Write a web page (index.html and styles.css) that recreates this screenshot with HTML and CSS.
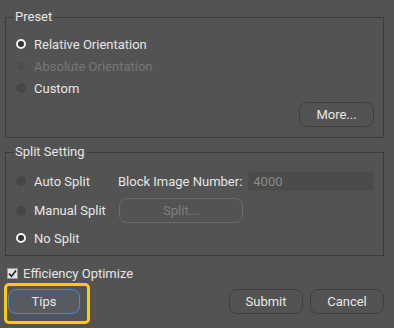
FILE: index.html
```html
<!DOCTYPE html>
<html>
  <head>
    <meta charset="utf-8" />
    <title>Preset</title>
    <link rel="stylesheet" href="styles.css">
  </head>
  <body>
    <div class="dialog">
      <fieldset class="group group--preset">
        <legend class="group__title">Preset</legend>
        <label class="radio">
          <span class="radio__dot radio__dot--on"></span>Relative Orientation
        </label>
        <label class="radio radio--disabled">
          <span class="radio__dot"></span>Absolute Orientation
        </label>
        <label class="radio">
          <span class="radio__dot"></span>Custom
        </label>
        <div class="group__actions">
          <button class="btn btn--more">More...</button>
        </div>
      </fieldset>

      <fieldset class="group group--split">
        <legend class="group__title">Split Setting</legend>
        <div class="split">
          <label class="radio">
            <span class="radio__dot"></span>Auto Split
          </label>
          <div class="split__field">
            <span class="split__label">Block Image Number:</span>
            <input class="split__input" type="text" value="4000" disabled />
          </div>
          <label class="radio">
            <span class="radio__dot"></span>Manual Split
          </label>
          <div class="split__field">
            <button class="btn btn--split" disabled>Split...</button>
          </div>
          <label class="radio radio--last">
            <span class="radio__dot radio__dot--on"></span>No Split
          </label>
        </div>
      </fieldset>

      <label class="check">
        <span class="check__box">
          <svg width="9" height="9" viewBox="0 0 9 9">
            <path d="M1 4.6 L3.5 7.2 L8 1.4" fill="none" stroke="#222" stroke-width="1.6" />
          </svg>
        </span>
        Efficiency Optimize
      </label>

      <div class="footer">
        <div class="footer__tips">
          <button class="btn btn--tips">Tips</button>
          <span class="highlight"></span>
        </div>
        <div class="footer__right">
          <button class="btn">Submit</button>
          <button class="btn">Cancel</button>
        </div>
      </div>
    </div>
  </body>
</html>
```

FILE: styles.css
```css
body {
  --color-bg: #535353;
  --color-text: #e6e6e6;
  --color-muted: #767676;
  --color-line: #3b3b3b;

  margin: 0;
  height: 328px;
  background: var(--color-bg);
  color: var(--color-text);
  font: 400 13px "Roboto", "Noto Sans", sans-serif;
  overflow: hidden;
}

.dialog {
  padding: 9px 10px 0 5px;
}

.group {
  margin: 0;
  min-width: 0;
  padding: 0 9px 0 10px;
  border: 1px solid var(--color-line);
}

.group__title {
  padding: 0 2px;
  margin-left: -3px;
  line-height: 16px;
}

.group--preset {
  height: 129px;
  box-sizing: border-box;
  padding-top: 8px;
}

.group--split {
  margin-top: 6px;
  padding-top: 11px;
  padding-bottom: 5px;
}

.group__actions {
  display: flex;
  justify-content: flex-end;
  margin-top: 3px;
}

.radio {
  display: flex;
  align-items: center;
  gap: 8px;
  height: 22px;
}

.radio--disabled {
  color: var(--color-muted);
}

.radio__dot {
  width: 10px;
  height: 10px;
  border-radius: 50%;
  background: #474747;
  box-sizing: border-box;
}

.radio--disabled .radio__dot {
  background: #4d4d4d;
  border: 1px solid #575757;
}

.radio__dot--on {
  background: #333;
  border: 2.5px solid #f2f2f2;
}

.split {
  display: grid;
  grid-template-columns: 102px minmax(0, 1fr);
  grid-template-rows: 20px 25px 20px;
  row-gap: 7px;
}

.split .radio {
  height: auto;
}

.split .radio--last {
  height: 20px;
  margin-top: -2px;
}

.split__field {
  display: flex;
  align-items: center;
  gap: 6px;
}

.split__label {
  white-space: nowrap;
}

.split__input {
  flex: 1;
  min-width: 0;
  height: 20px;
  box-sizing: border-box;
  padding: 0 4px;
  border: 1px solid #4f4f4f;
  border-radius: 2px;
  background: #4b4b4b;
  color: #8a8a8a;
  font: inherit;
  outline: none;
}

.btn {
  height: 25px;
  width: 74px;
  padding: 0;
  border: 1px solid #3f3f3f;
  border-radius: 8px;
  background: #535353;
  color: var(--color-text);
  font: inherit;
  font-size: 13px;
  cursor: pointer;
}

.btn--more {
  width: 75px;
}

.btn--split {
  width: 124px;
  margin-left: 1px;
  border-color: #6a6a6a;
  color: #7e7e7e;
}

.check {
  display: flex;
  align-items: center;
  gap: 5px;
  margin: 6px 0 0 2px;
  height: 22px;
}

.check__box {
  display: flex;
  align-items: center;
  justify-content: center;
  width: 11px;
  height: 11px;
  box-sizing: border-box;
  background: #e2e2e2;
  border: 1px solid #999;
}

.footer {
  display: flex;
  justify-content: space-between;
  align-items: center;
  margin-top: 5px;
  padding-left: 3px;
}

.footer__tips {
  position: relative;
}

.btn--tips {
  width: 72px;
  background: #575b61;
  border-color: #3d8ee2;
}

.highlight {
  position: absolute;
  left: -4px;
  top: -6px;
  width: 80px;
  height: 35px;
  border: 3px solid #ffc90e;
  border-radius: 5px;
  pointer-events: none;
}

.footer__right {
  display: flex;
  gap: 7px;
}
```
